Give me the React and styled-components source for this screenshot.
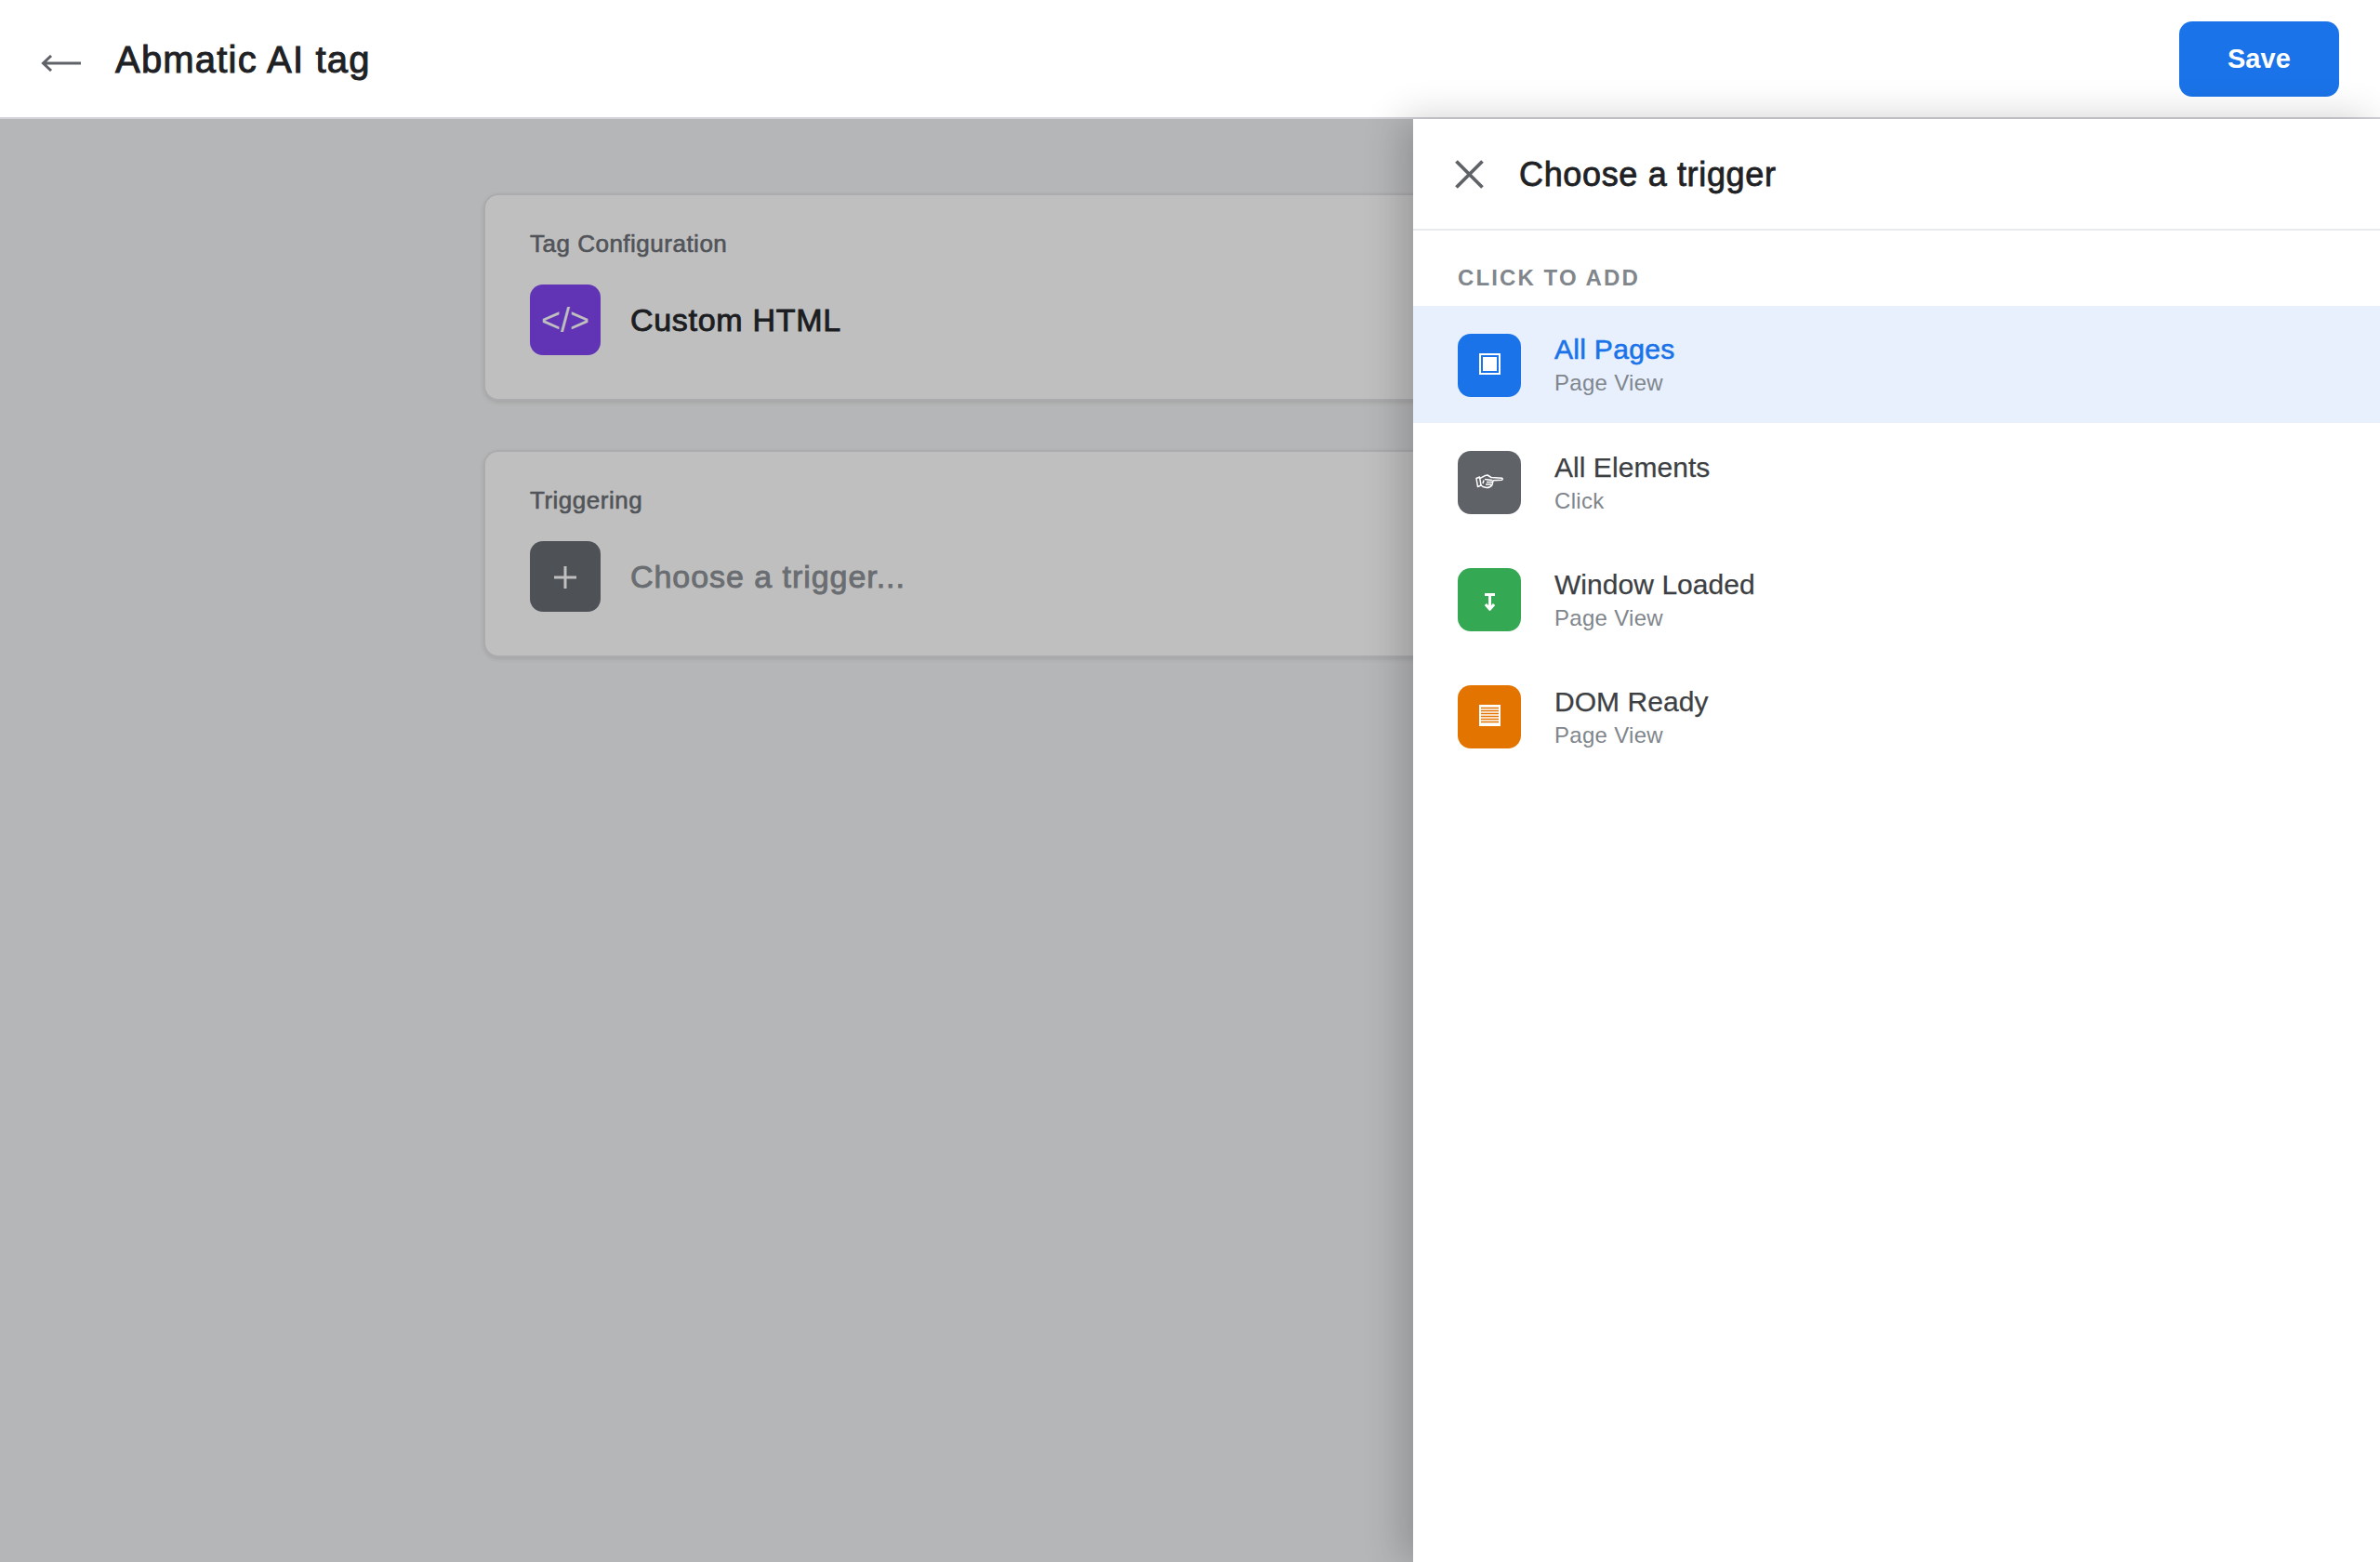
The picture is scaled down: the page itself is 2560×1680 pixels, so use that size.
import styled, { createGlobalStyle } from "styled-components";

const GlobalStyle = createGlobalStyle`
  html, body {
    margin: 0;
    padding: 0;
    height: 100%;
  }
  body {
    font-family: "Liberation Sans", Arial, sans-serif;
    background: #f2f3f4;
  }
`;

const Page = styled.div`
  position: relative;
  display: flex;
  flex-direction: column;
  height: 100vh;
  overflow: hidden;
`;

const Header = styled.header`
  display: flex;
  align-items: center;
  height: 126px;
  padding: 0 44px;
  flex-shrink: 0;
  background: #fff;
  border-bottom: 2px solid #d2d2d8;
`;

const BackButton = styled.button`
  display: flex;
  padding: 0;
  margin: 10px 37px 0 0;
  border: 0;
  background: transparent;
  color: #5f6368;
  cursor: pointer;
`;

const PageTitle = styled.h1`
  flex: 1;
  margin: 3px 0 0;
  font-size: 40px;
  font-weight: 400;
  letter-spacing: 1.2px;
  color: #202124;
  -webkit-text-stroke: 1px #202124;
`;

const SaveButton = styled.button`
  width: 172px;
  height: 81px;
  padding: 1px 0 0;
  border: 0;
  border-radius: 14px;
  background: #1a73e8;
  color: #fff;
  font-family: inherit;
  font-size: 29px;
  font-weight: 700;
  letter-spacing: 0.1px;
  cursor: pointer;
`;

const Main = styled.main`
  position: relative;
  flex: 1;
  display: flex;
  flex-direction: column;
  align-items: center;
  gap: 53px;
  padding-top: 80px;
`;

const Scrim = styled.div`
  position: absolute;
  inset: 0;
  background: rgba(0, 0, 0, 0.25);
`;

const Card = styled.section`
  box-sizing: border-box;
  width: 1520px;
  height: 223px;
  padding: 36px 48px 47px;
  border: 2px solid #e4e5e8;
  border-radius: 16px;
  background: #fff;
  box-shadow: 0 2px 5px rgba(0, 0, 0, 0.1);
`;

const CardLabel = styled.div`
  margin-bottom: 28px;
  font-size: 26px;
  line-height: 32px;
  letter-spacing: 0.5px;
  color: #6c7076;
  -webkit-text-stroke: 0.6px #6c7076;
`;

const CardRow = styled.div`
  display: flex;
  align-items: center;
  gap: 32px;
`;

const CardIcon = styled.div`
  display: flex;
  align-items: center;
  justify-content: center;
  box-sizing: border-box;
  width: 76px;
  height: 76px;
  padding-top: 2px;
  border-radius: 14px;
  background: ${(p) => p.$bg};
  color: #fff;
  font-size: 36px;
`;

const CardValue = styled.div`
  font-size: 34px;
  letter-spacing: ${(p) => (p.$muted ? "0.95px" : "0.7px")};
  color: ${(p) => (p.$muted ? "#8e9297" : "#26282c")};
  -webkit-text-stroke: 0.9px ${(p) => (p.$muted ? "#8e9297" : "#26282c")};
`;

const Panel = styled.aside`
  position: absolute;
  top: 128px;
  right: 0;
  bottom: 0;
  width: 1040px;
  background: #fff;
  box-shadow: -12px 0 40px rgba(0, 0, 0, 0.2);
`;

const PanelHeader = styled.div`
  display: flex;
  align-items: center;
  gap: 38px;
  height: 118px;
  padding-left: 45px;
  border-bottom: 2px solid #e8eaed;
`;

const CloseButton = styled.button`
  display: flex;
  padding: 0;
  border: 0;
  background: transparent;
  color: #5f6368;
  cursor: pointer;
`;

const PanelTitle = styled.h2`
  margin: 0;
  padding-top: 1px;
  font-size: 36px;
  font-weight: 400;
  letter-spacing: 0.65px;
  color: #202124;
  -webkit-text-stroke: 0.8px #202124;
`;

const SectionLabel = styled.div`
  padding: 36px 48px 15px;
  font-size: 24px;
  line-height: 30px;
  font-weight: 700;
  letter-spacing: 2.1px;
  color: #80868b;
`;

const TriggerRow = styled.div`
  display: flex;
  align-items: center;
  gap: 36px;
  box-sizing: border-box;
  height: 126px;
  padding: 2px 48px 0;
  background: ${(p) => (p.$selected ? "#e8f0fe" : "transparent")};
  cursor: pointer;
`;

const TriggerIcon = styled.div`
  display: flex;
  align-items: center;
  justify-content: center;
  box-sizing: border-box;
  flex-shrink: 0;
  width: 68px;
  height: 68px;
  padding: ${(p) => p.$pad};
  border-radius: 14px;
  background: ${(p) => p.$bg};
`;

const TriggerName = styled.div`
  margin-top: ${(p) => (p.$selected ? "-1px" : "0")};
  font-size: 30px;
  line-height: 36px;
  color: ${(p) => (p.$selected ? "#1a73e8" : "#3c4043")};
  letter-spacing: ${(p) => (p.$selected ? "0.3px" : "0.05px")};
  -webkit-text-stroke: ${(p) => (p.$selected ? "0.6px #1a73e8" : "0.25px #3c4043")};
`;

const TriggerType = styled.div`
  margin-top: 3px;
  font-size: 24px;
  line-height: 30px;
  letter-spacing: 0.3px;
  color: #80868b;
`;

const PageIcon = () => (
  <svg width="23" height="23" viewBox="0 0 23 23">
    <rect x="1" y="1" width="21" height="21" fill="none" stroke="#fff" strokeWidth="2" />
    <rect x="4" y="4" width="15" height="15" fill="#fff" />
  </svg>
);

const HandIcon = () => (
  <svg width="30" height="16" viewBox="0 0 30 16" fill="none" stroke="#fff" strokeWidth="1.5" strokeLinejoin="round">
    <path d="M1 4.5 4.5 3 6 12 2.5 13.5Z" />
    <path d="M5 4.5C8 3 10 1 13 1L17 3.5 28.5 4.2Q30 5.2 28.5 6.2L19 6.8 18 11.5Q16 14.5 12 14.5L8 13.5 5.6 11.5" />
    <path d="M10 5.5 18 6.5M12 8.5h6M11 11h6M9 6.5 8 10" />
  </svg>
);

const LoadIcon = () => (
  <svg width="11" height="19" viewBox="0 0 11 19" fill="none" stroke="#fff" strokeWidth="3">
    <path d="M0 1.5h11M5.5 1.5v15.5M1 12l4.5 5.2L10 12" />
  </svg>
);

const ReadyIcon = () => (
  <svg width="23" height="23" viewBox="0 0 23 23">
    <rect width="23" height="23" fill="#fff" />
    <path
      d="M2 3.5h19M2 6.5h19M2 9.5h19M2 12.5h19M2 15.5h19M2 18.5h19"
      stroke="#e37400"
      strokeWidth="1.4"
    />
  </svg>
);

const triggers = [
  { name: "All Pages", type: "Page View", icon: <PageIcon />, bg: "#1a73e8", pad: "0 0 4px", selected: true },
  { name: "All Elements", type: "Click", icon: <HandIcon />, bg: "#5f6368", pad: "0 0 2px" },
  { name: "Window Loaded", type: "Page View", icon: <LoadIcon />, bg: "#34a853", pad: "4px 0 0" },
  { name: "DOM Ready", type: "Page View", icon: <ReadyIcon />, bg: "#e37400", pad: "0 0 4px" },
];

export default function App() {
  return (
    <Page>
      <GlobalStyle />
      <Header>
        <BackButton aria-label="Back">
          <svg width="43" height="18" viewBox="0 0 43 18" fill="none" stroke="currentColor" strokeWidth="3">
            <path d="M2 9h41M11 1 2.5 9l8.5 8" />
          </svg>
        </BackButton>
        <PageTitle>Abmatic AI tag</PageTitle>
        <SaveButton>Save</SaveButton>
      </Header>

      <Main>
        <Card>
          <CardLabel>Tag Configuration</CardLabel>
          <CardRow>
            <CardIcon $bg="#8146f0">&lt;/&gt;</CardIcon>
            <CardValue>Custom HTML</CardValue>
          </CardRow>
        </Card>
        <Card>
          <CardLabel>Triggering</CardLabel>
          <CardRow>
            <CardIcon $bg="#696d73">
              <svg width="24" height="24" viewBox="0 0 24 24" stroke="currentColor" strokeWidth="3">
                <path d="M12 0v24M0 12h24" />
              </svg>
            </CardIcon>
            <CardValue $muted>Choose a trigger...</CardValue>
          </CardRow>
        </Card>
        <Scrim />
      </Main>

      <Panel>
        <PanelHeader>
          <CloseButton aria-label="Close">
            <svg width="31" height="31" viewBox="0 0 31 31" stroke="currentColor" strokeWidth="3.8">
              <path d="M1.5 1.5l28 28M29.5 1.5l-28 28" />
            </svg>
          </CloseButton>
          <PanelTitle>Choose a trigger</PanelTitle>
        </PanelHeader>
        <SectionLabel>CLICK TO ADD</SectionLabel>
        {triggers.map((t) => (
          <TriggerRow key={t.name} $selected={t.selected}>
            <TriggerIcon $bg={t.bg} $pad={t.pad}>{t.icon}</TriggerIcon>
            <div>
              <TriggerName $selected={t.selected}>{t.name}</TriggerName>
              <TriggerType>{t.type}</TriggerType>
            </div>
          </TriggerRow>
        ))}
      </Panel>
    </Page>
  );
}
